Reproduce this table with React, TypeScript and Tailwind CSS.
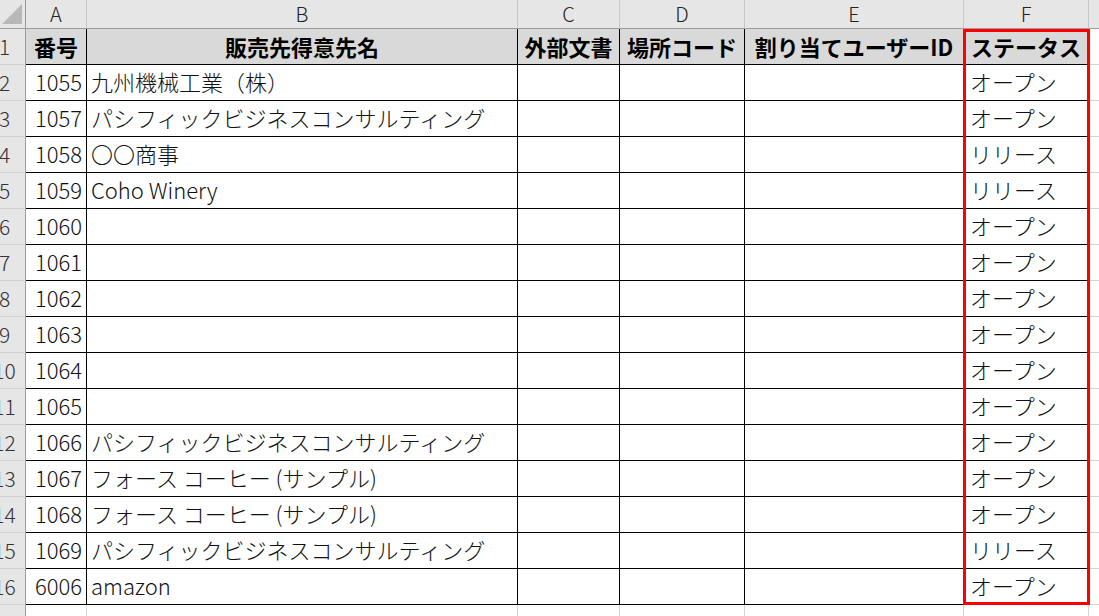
import React from "react";

const rows: [string, string, string][] = [
  ["1055", "九州機械工業（株）", "オープン"],
  ["1057", "パシフィックビジネスコンサルティング", "オープン"],
  ["1058", "〇〇商事", "リリース"],
  ["1059", "Coho Winery", "リリース"],
  ["1060", "", "オープン"],
  ["1061", "", "オープン"],
  ["1062", "", "オープン"],
  ["1063", "", "オープン"],
  ["1064", "", "オープン"],
  ["1065", "", "オープン"],
  ["1066", "パシフィックビジネスコンサルティング", "オープン"],
  ["1067", "フォース コーヒー (サンプル)", "オープン"],
  ["1068", "フォース コーヒー (サンプル)", "オープン"],
  ["1069", "パシフィックビジネスコンサルティング", "リリース"],
  ["6006", "amazon", "オープン"],
];

const headers = ["番号", "販売先得意先名", "外部文書", "場所コード", "割り当てユーザーID", "ステータス"];
const letters = ["A", "B", "C", "D", "E", "F", ""];

const gridCols = "grid grid-cols-[42px_61px_431px_102px_125px_219px_125px_1fr]";

function RowHead({ n }: { n: number | string }) {
  return (
    <div className="h-[36px] bg-[#e6e6e6] border-r border-b border-r-[#9b9b9b] border-b-[#d0d0d0] flex items-center justify-center text-[21px] font-light text-[#333] pb-[1px]">
      <span className="leading-none">{n}</span>
    </div>
  );
}

export default function App() {
  return (
    <div className="relative w-[1099px] h-[616px] overflow-hidden bg-white font-['Noto_Sans_CJK_JP','Noto_Sans',sans-serif] text-[#111]">
      <div className={`${gridCols} ml-[-16px] w-[1115px]`}>
        {/* column header row */}
        <div className="h-[29px] bg-[#e6e6e6] border-r border-b border-r-[#9b9b9b] border-b-[#9b9b9b] flex items-end justify-end pr-[3px] pb-[4px]">
          <svg width="20" height="20" viewBox="0 0 20 20">
            <polygon points="0,20 20,20 20,0" fill="#b8b8b8" />
          </svg>
        </div>
        {letters.map((l, i) => (
          <div
            key={i}
            className={`h-[29px] bg-[#e6e6e6] border-b border-b-[#9b9b9b] ${i < 6 ? "border-r border-r-[#c6c6c6]" : ""} flex justify-center items-start pt-[3px] text-[20px] font-light text-[#222] leading-none`}
          >
            <span className="leading-[22px]">{l}</span>
          </div>
        ))}

        {/* header row 1 */}
        <RowHead n={1} />
        {headers.map((t) => (
          <div
            key={t}
            className="h-[36px] bg-[#d9d9d9] border-r border-b border-black flex items-center justify-center pb-[2px] font-bold text-[22px] text-black leading-none whitespace-nowrap overflow-hidden"
          >
            {t}
          </div>
        ))}
        <div className="h-[36px] border-b border-b-[#d4d4d4]" />

        {rows.map((r, idx) => (
          <React.Fragment key={idx}>
            <RowHead n={idx + 2} />
            <div className="h-[36px] border-r border-b border-black flex items-center justify-end pr-[4px] pb-[3px] text-[22px] font-light leading-none">
              {r[0]}
            </div>
            <div className="h-[36px] border-r border-b border-black flex items-center pl-[4px] pb-[3px] text-[22px] font-light leading-none whitespace-nowrap overflow-hidden">
              {r[1]}
            </div>
            <div className="h-[36px] border-r border-b border-black" />
            <div className="h-[36px] border-r border-b border-black" />
            <div className="h-[36px] border-r border-b border-black" />
            <div className="h-[36px] border-r border-b border-black flex items-center pl-[6px] pb-[3px] text-[22px] font-light leading-none whitespace-nowrap">
              {r[2]}
            </div>
            <div className="h-[36px] border-b border-b-[#d4d4d4]" />
          </React.Fragment>
        ))}

        {/* row 17 */}
        <RowHead n={17} />
        {[0, 1, 2, 3, 4, 5].map((i) => (
          <div key={i} className="h-[36px] border-r border-b border-[#d4d4d4]" />
        ))}
        <div className="h-[36px] border-b border-[#d4d4d4]" />
      </div>

      {/* red highlight box over column F */}
      <div className="absolute left-[963px] top-[29px] w-[127px] h-[576px] border-[3px] border-[#ff0000] pointer-events-none" />
    </div>
  );
}
